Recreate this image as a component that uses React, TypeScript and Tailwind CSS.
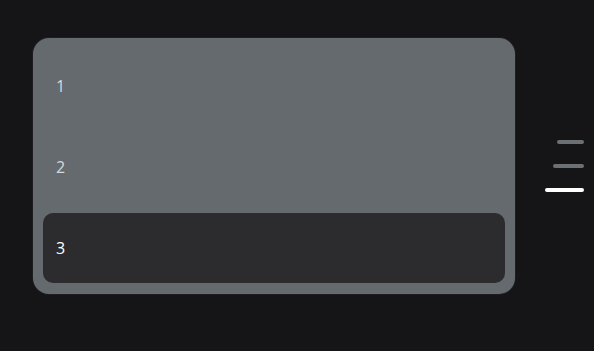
const items = ["1", "2", "3"];
const bars = [
  { w: "w-[27px]", active: false },
  { w: "w-[31px]", active: false },
  { w: "w-[39px]", active: true },
];

export default function App() {
  const selected = 2;

  return (
    <main className="h-[351px] w-[594px] bg-[#151517] font-['Open_Sans','Noto_Sans',sans-serif]">
      <div className="flex items-center pl-[33px] pr-[10px] pt-[38px]">
        <div className="flex w-[482px] flex-col gap-[11px] rounded-[16px] bg-[#646a6e] px-[10px] pb-[11px] pt-[13px] shadow-[0_0_0_1px_rgba(255,255,255,0.04)]">
          {items.map((label, i) => (
            <div
              key={label}
              className={
                i === selected
                  ? "flex h-[70px] items-center rounded-[10px] bg-[#2c2c2e] pl-[13px] text-[16px] text-white"
                  : "flex h-[70px] items-center pl-[13px] text-[16px] text-[#d6d9dc]"
              }
            >
              {label}
            </div>
          ))}
        </div>
        <div className="ml-auto flex flex-col items-end gap-[20px]">
          {bars.map((b, i) => (
            <div
              key={i}
              className={`${b.w} h-[4px] rounded-full ${b.active ? "bg-white" : "bg-[#6c6f73]"}`}
            />
          ))}
        </div>
      </div>
    </main>
  );
}
